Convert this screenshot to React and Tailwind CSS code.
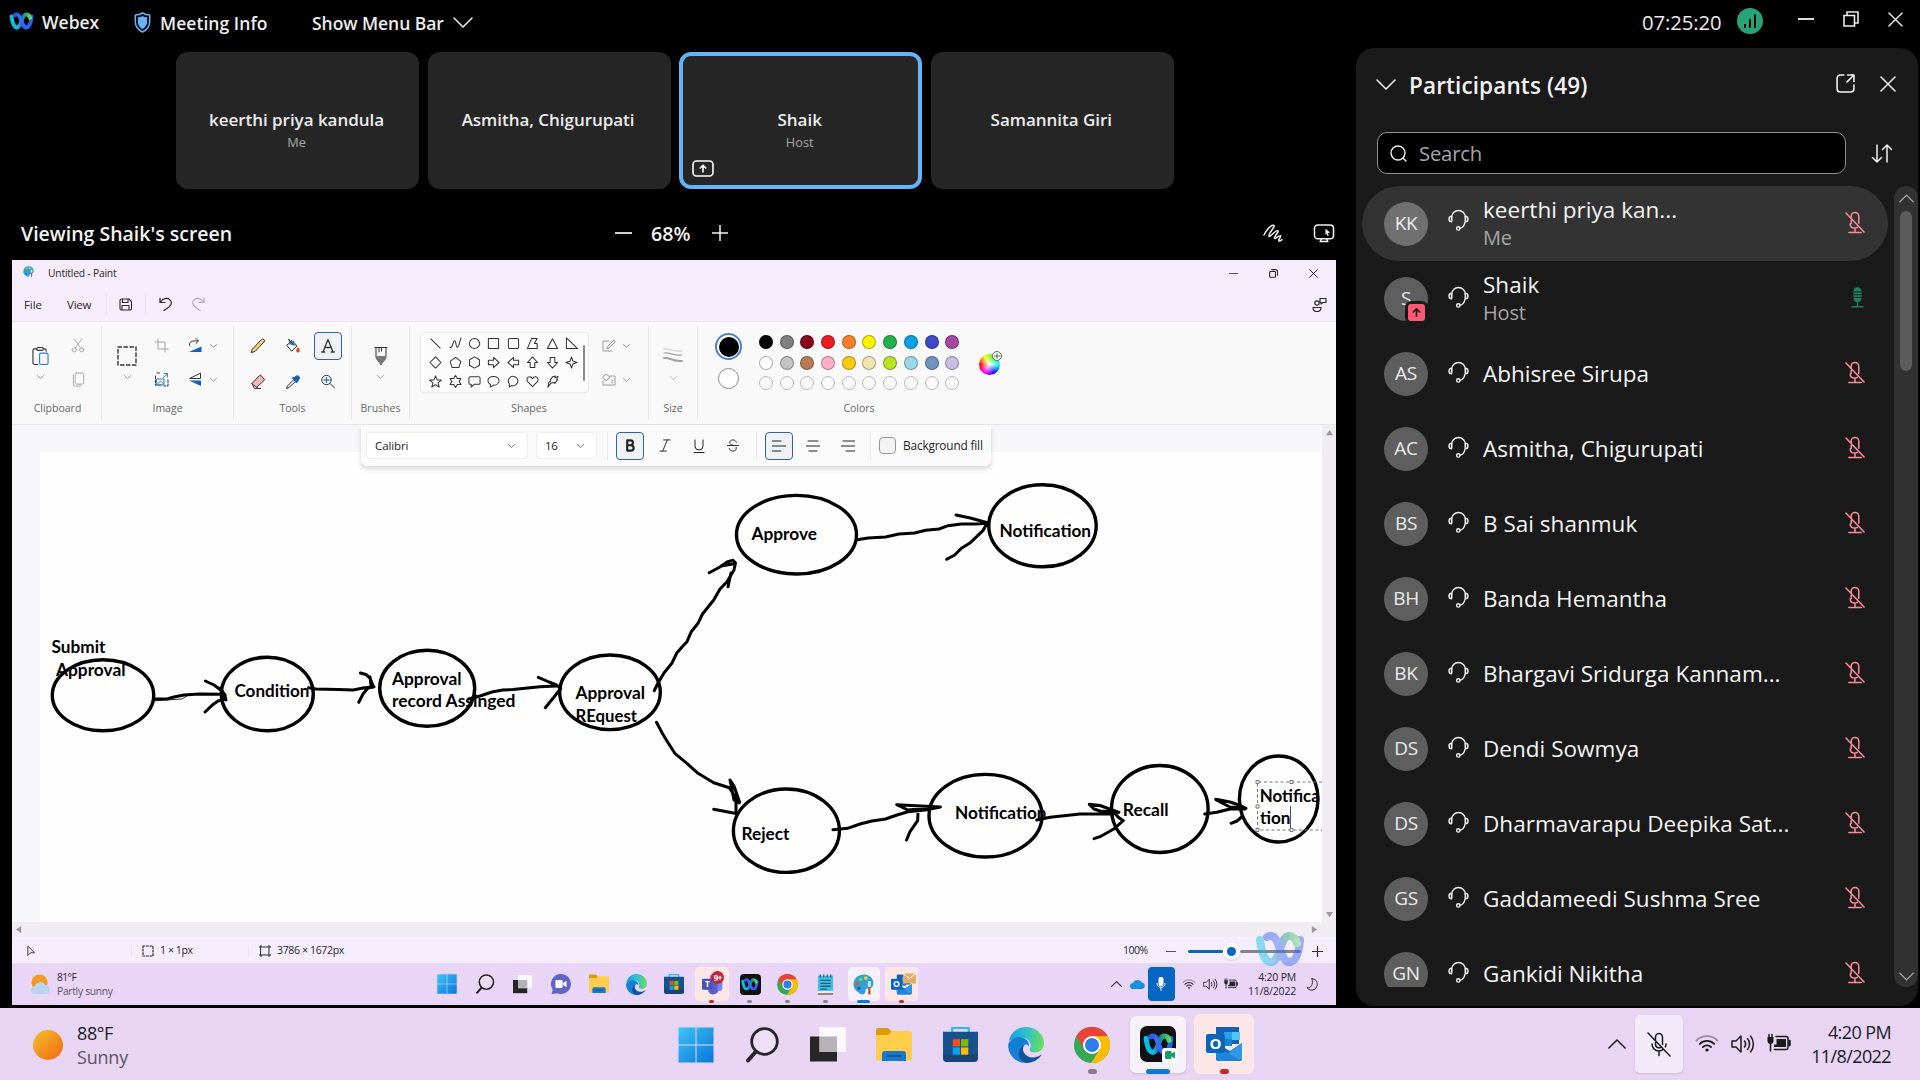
import React from "react";

/* ---------- shared glyphs ---------- */

function Svg({ box = "0 0 16 16", className = "", children, sw = 1, ...rest }) {
  return (
    <svg viewBox={box} className={`shrink-0 ${className}`} fill="none" stroke="currentColor" strokeWidth={sw} strokeLinecap="round" strokeLinejoin="round" {...rest}>
      {children}
    </svg>
  );
}

const ChevronDown = ({ className, sw = 1.5 }) => (
  <Svg box="0 0 20 11" sw={sw} className={className}><path d="M1 1l9 9 9-9" /></Svg>
);
const ChevronUp = ({ className, sw = 1.5 }) => (
  <Svg box="0 0 20 11" sw={sw} className={className}><path d="M1 10l9-9 9 9" /></Svg>
);
const Cross = ({ className, sw = 1.5 }) => (
  <Svg box="0 0 16 16" sw={sw} className={className}><path d="M1 1l14 14M15 1L1 15" /></Svg>
);

function WebexMark({ className, id, box = "0 0 50 36" }) {
  return (
    <svg viewBox={box} className={`shrink-0 ${className}`} fill="none" strokeWidth="8" strokeLinecap="round">
      <defs>
        <linearGradient id={`${id}a`} gradientUnits="userSpaceOnUse" x1="4" y1="10" x2="44" y2="8">
          <stop offset="0" stopColor="#07c1e4" /><stop offset="0.3" stopColor="#12b8e6" /><stop offset="0.5" stopColor="#1c6fb0" /><stop offset="0.7" stopColor="#23a07a" /><stop offset="1" stopColor="#66e05a" />
        </linearGradient>
        <linearGradient id={`${id}b`} gradientUnits="userSpaceOnUse" x1="8" y1="5" x2="46" y2="20">
          <stop offset="0" stopColor="#2a52e8" /><stop offset="0.4" stopColor="#3a6bff" /><stop offset="1" stopColor="#2f5cf0" />
        </linearGradient>
      </defs>
      <path d="M34 31C41 31 44 22 45 9" stroke={`url(#${id}b)`} />
      <path d="M16 31C25 31 25 5 34 5C38 5 41 8 42 12" stroke={`url(#${id}a)`} />
      <path d="M12 6C13 5 14 5 16 5C25 5 25 31 34 31" stroke={`url(#${id}b)`} />
      <path d="M5 9C7 24 10 31 16 31" stroke={`url(#${id}a)`} />
    </svg>
  );
}

const Headset = ({ className }) => (
  <Svg box="0 0 21 22" sw={1.4} className={className}>
    <path d="M3.6 11.5V8.4a6.9 6.9 0 0 1 13.8 0v3.1" />
    <path d="M3.6 7.2C1.8 7.2 1 8.300 1 10s.8 2.800 2.600 2.800zM17.400 7.200c1.800 0 2.600 1.100 2.600 2.800s-.8 2.800-2.600 2.800zM17 13c-.5 3-2.300 5.700-5 6.200" />
    <circle cx="10.300" cy="19.400" r="1.700" />
  </Svg>
);
const MicOff = ({ className }) => (
  <Svg box="0 0 21 24" sw={1.6} className={className}>
    <path d="M6.500 8V5.500a4 4 0 0 1 8 0v7.200M6.500 10v3M5.500 13.500c0 2.500 2 4.300 4.800 4.300 1 0 1.900-.2 2.600-.7M10.500 18v4M4 22.400h13M1 2l19 20" />
  </Svg>
);
const MicOn = ({ className }) => (
  <Svg box="0 0 14 23" sw={1.400} className={className}>
    <rect x="2.500" y="1" width="9" height="16" rx="4.500" fill="#1d805f" stroke="none" />
    <path d="M3 6h8M3 9h8M3 12h8" stroke="#1a1a1a" strokeWidth="1" />
    <path d="M7 16.500v5M1 22h12" />
  </Svg>
);

/* ---------- taskbar artwork ---------- */

const StartIcon = ({ className, id }) => (
  <svg viewBox="0 0 36 36" className={className}>
    <defs><linearGradient id={id} x1="0" y1="0" x2="1" y2="1" gradientUnits="objectBoundingBox"><stop offset="0" stopColor="#3fc3f8" /><stop offset="1" stopColor="#0a76d8" /></linearGradient></defs>
    <path fill={`url(#${id})`} d="M1 .5h16.500v17H.5V1zM18.500 .5h17v17h-17zM.5 18.500h17v17H.5zM18.500 18.500h17v17h-17z" />
  </svg>
);
const SearchIcon = ({ className }) => (
  <svg viewBox="0 0 36 36" className={className} fill="none" stroke="#262329" strokeLinecap="round">
    <circle cx="20.500" cy="14.500" r="12.800" strokeWidth="2.800" fill="#f4eafa" fillOpacity=".5" /><path d="M11.500 25L4 33.500" strokeWidth="4" />
  </svg>
);
const TaskViewIcon = ({ className }) => (
  <svg viewBox="0 0 36 36" className={className}>
    <path fill="#262626" d="M0 9.500h27v25H0z" /><path fill="#fcfcfc" d="M9.500 0H36v25H9.500z" opacity=".92" /><path fill="#b5b3b5" d="M9.500 9.500H27V25H9.500z" />
  </svg>
);
const ChatIcon = ({ className }) => (
  <svg viewBox="0 0 36 36" className={className}>
    <path fill="#6264c7" d="M18 0a18 18 0 1 1-6 35L1 36l2-8A18 18 0 0 1 18 0z" /><rect x="8" y="11" width="13" height="14" rx="2" fill="#fff" /><path fill="#fff" d="M22 16l6-4v12l-6-4z" />
  </svg>
);
const FolderIcon = ({ className }) => (
  <svg viewBox="0 0 36 36" className={className}>
    <path fill="#dc9b08" d="M0 3a2 2 0 0 1 2-2h10l4 4v3H0z" /><path fill="#fdce4b" d="M0 8h12l4-4h18a2 2 0 0 1 2 2v27.500H0z" /><path fill="#1877c9" d="M6 34v-7a3 3 0 0 1 3-3h18a3 3 0 0 1 3 3v7z" /><path d="M11 29h14" stroke="#0d4f93" strokeWidth="1.500" />
  </svg>
);
const StoreIcon = ({ className }) => (
  <svg viewBox="0 0 36 36" className={className}>
    <path d="M9.500 6V1h17v5" fill="none" stroke="#2db7ef" strokeWidth="2.200" /><path fill="#17528c" d="M0 5h36v27a4 4 0 0 1-4 4H4a4 4 0 0 1-4-4z" /><path fill="#21345f" d="M0 28h36v4a4 4 0 0 1-4 4H4a4 4 0 0 1-4-4z" opacity=".5" />
    <path fill="#f25022" d="M10 12.500h7.500v7.500H10z" /><path fill="#7fba00" d="M18.500 12.500H26v7.500h-7.500z" /><path fill="#00a4ef" d="M10 21h7.500v7.500H10z" /><path fill="#ffb900" d="M18.500 21H26v7.500h-7.500z" />
  </svg>
);
const EdgeIcon = ({ className, id }) => (
  <svg viewBox="0 0 36 36" className={className}>
    <defs><linearGradient id={id} x1="0" y1="0.200" x2="1" y2="0.300"><stop offset="0" stopColor="#1b9be0" /><stop offset=".5" stopColor="#2fc1cf" /><stop offset="1" stopColor="#6bdc5c" /></linearGradient></defs>
    <path fill={`url(#${id})`} d="M1 14C3 5 10 0 18 0c10 0 18 7.500 18 16 0 6-4 9.500-9 9.500-4.500 0-6-2-5-4 1.500-2.500 1-9-6-10.500C9 10 3 12 1 14z" />
    <path fill="#1180d6" d="M.2 18C1 12 8 9 14 10.500c5 1.300 7.500 5 7 9-1-2-3-2.500-4.500-1.500-5 3.500-2 14 7.500 15.500-2 1.700-5 2.500-8 2.300C7 35 0 27 .2 18z" />
    <path fill="#11529e" d="M16.500 18c-4 4 0 12.500 8 12.500 4 0 7-1.500 9.500-3.500C31 32.500 25 36 18.500 36 9 34 8 22 16.500 18z" />
  </svg>
);
const ChromeIcon = ({ className }) => (
  <svg viewBox="0 0 36 36" className={className}>
    <circle cx="18" cy="18" r="18" fill="#34a853" /><path fill="#fbbc05" d="M18 9h15.600A18 18 0 0 1 17 36l8.800-13.500z" /><path fill="#ea4335" d="M2.400 9A18 18 0 0 1 33.600 9H18l-7.800 13.500z" /><circle cx="18" cy="18" r="9" fill="#fff" /><circle cx="18" cy="18" r="7" fill="#2f7de9" />
  </svg>
);
const NotepadIcon = ({ className }) => (
  <svg viewBox="0 0 36 36" className={className}>
    <path fill="#45bde0" d="M5 3h26v28H5z" /><path fill="#dff3f8" d="M5 29h26v5H5z" /><path fill="#8a5b3c" d="M5 33h26v2.500H5z" /><path d="M9 11h18M9 16h18M9 21h18M9 26h12" stroke="#14657f" strokeWidth="2.200" /><path d="M9 1v5M15 1v5M21 1v5M27 1v5" stroke="#135a72" strokeWidth="2" />
  </svg>
);
const PaintIcon = ({ className }) => (
  <svg viewBox="0 0 36 36" className={className}>
    <path fill="#28a4dc" d="M19 1c9 0 16 6 16 15 0 6-4 9-9 9-5 0-4 3-5 6-1 5-6 5-10 2C5 29 0 24 1 16 2 7 9 1 19 1z" />
    <circle cx="8" cy="17" r="3.500" fill="#e8573c" /><circle cx="13" cy="9" r="3.200" fill="#7fd14a" /><circle cx="22" cy="7" r="3.200" fill="#f7c948" /><circle cx="10" cy="25" r="3" fill="#1c5fb8" />
    <path d="M28 12v10" stroke="#e4e4e4" strokeWidth="5" /><path d="M28 22v13" stroke="#a8622c" strokeWidth="4" />
  </svg>
);
const TeamsIcon = ({ className }) => (
  <svg viewBox="0 0 36 36" className={className}>
    <circle cx="19" cy="6" r="5.500" fill="#7b83eb" /><path fill="#5a60c9" d="M11 13h17v13a9 9 0 0 1-17 4z" /><path fill="#7b83eb" d="M26 13h9v10a6 6 0 0 1-8 6z" /><rect y="8" width="19" height="19" rx="2" fill="#4a52b5" /><text x="5" y="22.500" fontSize="14" fontWeight="700" fill="#fff" fontFamily="Open Sans, sans-serif">T</text>
  </svg>
);
const OutlookIcon = ({ className }) => (
  <svg viewBox="0 0 36 36" className={className}>
    <path fill="#0f62b5" d="M10 1h23v17H10z" /><path fill="#2aa0ea" d="M18 6h8v7h-8z" /><path fill="#52c5f8" d="M26 6h8v8h-8z" /><path fill="#1581d6" d="M18 13h8v7h-8z" /><path fill="#1a6ab9" d="M10 17l14 8 12-8v16a2 2 0 0 1-2 2H12a2 2 0 0 1-2-2z" /><path fill="#2e9ae6" d="M36 17v17L12 35z" /><path fill="#1b87dc" d="M10 20l25 14.500H12a2 2 0 0 1-2-2z" />
    <rect y="8" width="19" height="19" rx="2" fill="#0c64b8" /><text x="3.600" y="23" fontSize="15" fontWeight="700" fill="#fff" fontFamily="Open Sans, sans-serif">O</text>
  </svg>
);
const WebexTile = ({ className, mark, id }) => (
  <div className={`flex items-center justify-center bg-[#111] ${className}`}><WebexMark id={id} className={mark} /></div>
);

const Wifi = ({ className }) => (
  <Svg box="0 0 24 20" sw={1.800} className={className}>
    <path d="M1.500 7.500a15 15 0 0 1 21 0" className="opacity-40" /><path d="M4.800 10.800a10.300 10.300 0 0 1 14.400 0M8 14a5.700 5.700 0 0 1 8 0" /><circle cx="12" cy="17" r="1.600" fill="currentColor" stroke="none" />
  </Svg>
);
const Speaker = ({ className }) => (
  <Svg box="0 0 24 20" sw={1.500} className={className}>
    <path d="M1 7h4l5-5v16l-5-5H1zM13.500 7a5 5 0 0 1 0 6M16.500 4.500a8.500 8.500 0 0 1 0 11M19.500 2a12.500 12.500 0 0 1 0 16" />
  </Svg>
);
const Battery = ({ className }) => (
  <Svg box="0 0 24 20" sw={1.500} className={className}>
    <path d="M9 3.500h10a2 2 0 0 1 2 2v9a2 2 0 0 1-2 2H7.500" /><path d="M9.500 6H19v8H7v-2.500h2.500z" fill="currentColor" stroke="none" /><path d="M22.500 8v4" strokeWidth="2.500" />
    <path d="M.5 4h6v4a3 3 0 0 1-6 0z" fill="currentColor" stroke="none" /><path d="M2 1.500V4M5 1.500V4M3.500 11v7" />
  </Svg>
);

/* ---------- Webex window ---------- */

function TopBar() {
  return (
    <header className="flex h-[52px] items-start text-[#ececec]">
      <WebexMark id="wxTop" className="ml-[9px] mt-[12px] h-[18px] w-[25px]" />
      <span className="ml-[8px] mt-[11px] w-[57px] text-[17.500px] leading-[22px] font-semibold">Webex</span>
      <Svg box="0 0 17 21" sw={1.500} className="ml-[35px] mt-[12px] h-[21px] w-[17px] text-[#64b4fa]">
        <path d="M8.500 1c2 1.300 4.500 2 7.200 2v6.500c0 5-3 8.500-7.200 10.500C4.300 18 1.300 14.500 1.300 9.500V3c2.700 0 5.200-.7 7.200-2z" />
        <path d="M8.500 4c1.300.8 2.800 1.200 4.700 1.300v4.200c0 3.500-2 6.200-4.700 7.700-2.700-1.500-4.700-4.200-4.700-7.700V5.300C5.700 5.200 7.200 4.800 8.500 4z" fill="currentColor" stroke="none" />
      </Svg>
      <span className="ml-[9px] mt-[12px] w-[109px] text-[17.500px] leading-[23px] font-semibold tracking-[0.050px] whitespace-nowrap">Meeting Info</span>
      <span className="ml-[43px] mt-[12px] w-[132px] text-[17.500px] leading-[23px] font-semibold tracking-[-0.050px] whitespace-nowrap">Show Menu Bar</span>
      <ChevronDown className="ml-[9px] mt-[17px] h-[11px] w-[20px]" />
      <div className="ml-auto flex items-start">
        <span className="mt-[9px] w-[84px] text-[20.300px] leading-[26px] tracking-[-0.100px] whitespace-nowrap">07:25:20</span>
        <div className="ml-[11px] mt-[8px] flex size-[26px] items-end justify-center gap-[3px] rounded-full bg-[#27a37a] pb-[6px]">
          <i className="h-[4px] w-[2px] rounded bg-black" /><i className="h-[9px] w-[2px] rounded bg-black" /><i className="h-[14px] w-[2px] rounded bg-black" />
        </div>
        <i className="ml-[35px] mt-[18px] h-[2px] w-[16px] bg-[#dcdcdc]" />
        <Svg box="0 0 16 16" sw={1.600} className="ml-[29px] mt-[11px] size-[16px]"><path d="M1 4.500h10.500V15H1zM4 4V1h11v11h-3" strokeLinejoin="miter" /></Svg>
        <Cross className="mr-[17px] ml-[29px] mt-[12px] size-[15px]" />
      </div>
    </header>
  );
}

function Tile({ name, role, active }) {
  return (
    <div className={`relative h-[137px] w-[243px] rounded-[12px] border-4 bg-[#262626] pr-[2px] text-center ${active ? "border-[#64b4fa]" : "border-[#262626]"}`}>
      <div className="mt-[53px] text-[17px] leading-[22px] font-semibold tracking-[-0.030px] text-[#ededed]">{name}</div>
      {role && <div className="mt-[3px] text-[12.800px] leading-[16px] text-[#a8a8a8]">{role}</div>}
      {active && (
        <Svg box="0 0 22 17" sw={1.600} className="absolute bottom-[8px] left-[9px] h-[17px] w-[22px] text-white"><rect x="1" y="1" width="20" height="15" rx="3.500" /><path d="M11 12V5.500M8.200 8L11 5.200 13.800 8" /></Svg>
      )}
    </div>
  );
}

function ViewBar() {
  return (
    <div className="flex h-[71px] items-center pt-[17px] text-[#f2f2f2]">
      <span className="mt-px ml-[21px] w-[212px] text-[19.500px] font-semibold whitespace-nowrap">Viewing Shaik's screen</span>
      <i className="ml-[382px] h-[2px] w-[17px] bg-[#d0d0d0]" />
      <span className="mt-px ml-[19px] w-[42px] text-[19.700px] font-semibold">68%</span>
      <Svg box="0 0 16 16" sw={1.500} className="ml-[19px] size-[16px]"><path d="M8 0v16M0 8h16" /></Svg>
      <Svg box="0 0 20 18" sw={1.500} className="ml-[535px] h-[18px] w-[20px]"><path d="M1 11C3.500 6 8 .8 10.500 1.200c3 .8-6 8.800-4.500 11 1.200 1.600 6.500-6.500 8.700-5.500 2 1-4.400 6-3.200 7.600 1 1.200 4.500-3.500 6-2.600 1.200.9-3 4-1.500 5.300.8.400 2-.5 3-1.300" /></Svg>
      <Svg box="0 0 22 20" sw={1.600} className="ml-[30px] h-[19px] w-[22px]"><rect x="1" y="1" width="20" height="14.500" rx="3.500" /><path d="M8 16l-1 2.500h8L14 16" /><path d="M12.500 5l5 4-2.500.5 1 2.500-1.300.5-1-2.500-1.200 1.500z" fill="currentColor" stroke="none" /></Svg>
    </div>
  );
}

/* ---------- Paint ---------- */

function Group({ label, className, children }) {
  return (
    <div className={`flex shrink-0 flex-col items-center ${className}`}>
      <div className="flex h-[75px] w-full items-start">{children}</div>
      <span className="text-[10.500px] leading-[14px] text-[#666]">{label}</span>
    </div>
  );
}
const Divider = ({ className = "h-[94px]" }) => <i className={`w-px shrink-0 bg-[#e9e7ea] ${className}`} />;
const TinyChevron = ({ className = "" }) => <ChevronDown sw={2.400} className={`h-[4px] w-[7px] text-[#8a8a8a] ${className}`} />;

const SHAPES = [
  "M2 2l10 10", "M1 11c3 2 3-7 5-7s1 7 3 7 2-5 4-10", "M7 1.500a5.500 5.500 0 1 0 .01 0z", "M1.500 1.500h11v11h-11z", "M3 1.500h8a1.500 1.500 0 0 1 1.500 1.500v8a1.500 1.500 0 0 1-1.500 1.500H3A1.500 1.500 0 0 1 1.500 11V3A1.500 1.500 0 0 1 3 1.500z", "M6 1.500h6L9 7h3v5.500H1.500z", "M7 2l5.500 10.500h-11z", "M1.500 1v11.500h12z",
  "M7 1l6 6-6 6-6-6z", "M7 1.500l5.800 4.300-2.200 6.700H3.400L1.200 5.800z", "M7 1l5.300 3v6L7 13l-5.300-3V4z", "M1.500 4.500H7V1.500L13 7l-6 5.500v-3H1.500z", "M12.500 4.500H7V1.500L1 7l6 5.500v-3h5.500z", "M4.500 12.500V7H1.500L7 1l5.500 6h-3v5.500z", "M4.500 1.500V7H1.500L7 13l5.500-6h-3V1.500z", "M7 1l1.500 4.500L13 7 8.500 8.500 7 13 5.500 8.500 1 7l4.500-1.500z",
  "M7 1l1.700 4.300 4.600.2-3.600 2.900 1.300 4.500L7 10.300l-4 2.600 1.300-4.500L.7 5.500l4.600-.2z", "M7 .5l2 3.200h3.800L11 7l1.800 3.300H9L7 13.500 5 10.300H1.200L3 7 1.200 3.700H5z", "M2.500 2h9A1.500 1.500 0 0 1 13 3.500v5a1.500 1.500 0 0 1-1.500 1.500H6.500L3.500 13v-3h-1A1.500 1.500 0 0 1 1 8.500v-5A1.500 1.500 0 0 1 2.500 2z", "M7 1.500c3.500 0 6 2 6 4.700S10.500 11 7 11L3.500 13l.3-2.700C2 9.400 1 8 1 6.200c0-2.700 2.500-4.700 6-4.700z", "M7 1.500a5 5 0 1 1-2 9.700L2.500 13V9.500A5 5 0 0 1 7 1.500z", "M7 12.500L2 7.500C0 5 1.500 2 4 2c1.500 0 2.500 1 3 2 .5-1 1.500-2 3-2 2.500 0 4 3 2 5.500z", "M7 2l3-1-.5 2L13 1.500l-1.500 3 1 .5-3 4-1-1L5 9 2 13l1-5 2-1.500-.5-1z",
];
const PALETTE = [
  ["bg-black", "bg-[#7f7f7f]", "bg-[#88001b]", "bg-[#ed1c24]", "bg-[#ff7f27]", "bg-[#fff200]", "bg-[#22b14c]", "bg-[#00a2e8]", "bg-[#3f48cc]", "bg-[#a349a4]"],
  ["bg-white", "bg-[#c3c3c3]", "bg-[#b97a57]", "bg-[#ffaec9]", "bg-[#ffc90e]", "bg-[#efe4b0]", "bg-[#b5e61d]", "bg-[#99d9ea]", "bg-[#7092be]", "bg-[#c8bfe7]"],
  Array(10).fill("bg-[#fafafa]"),
];

function PaintRibbon() {
  return (
    <div className="flex h-[103px] items-start border-b border-[#e4e6e7] bg-[#f9f9f9] pt-[4px] text-[#333]">
      <Group label="Clipboard" className="w-[91px]">
        <div className="ml-[19px] mt-[20px] flex w-[18px] flex-col items-center">
          <Svg box="0 0 18 20" className="h-[20px] w-[17px]" sw={1.200}><path d="M6 19H3a2 2 0 0 1-2-2V4a1.500 1.500 0 0 1 1.500-1.500H5M12 2.500h1.500A1.500 1.500 0 0 1 15 4v1" /><rect x="5" y="1" width="7" height="3" rx="1.500" /><rect x="8" y="7" width="9" height="12" rx="1.500" stroke="#2a7fcf" fill="#f2f8fd" /></Svg>
          <TinyChevron className="mt-[9px]" />
        </div>
        <div className="ml-[22px] mt-[12px] flex flex-col gap-[19px] text-[#a5a5a5]">
          <Svg box="0 0 14 16" className="h-[15px] w-[14px]"><path d="M3 1l7 10M11 1L4 11" /><circle cx="3" cy="12.500" r="2.200" /><circle cx="11" cy="12.500" r="2.200" /></Svg>
          <Svg box="0 0 14 16" className="h-[15px] w-[14px]"><rect x="4" y="1" width="9" height="12" rx="1.500" /><path d="M2 3v10a2 2 0 0 0 2 2h6" /></Svg>
        </div>
      </Group>
      <Divider className="-ml-[2px] h-[94px]" />
      <Group label="Image" className="w-[131px]">
        <div className="ml-[15px] mt-[20px] flex w-[20px] flex-col items-center">
          <Svg box="0 0 20 20" className="size-[20px]" sw={1.400}><rect x="1" y="1" width="18" height="18" strokeDasharray="3.500 2.500" /></Svg>
          <TinyChevron className="mt-[9px]" />
        </div>
        <div className="ml-[17px] mt-[12px] flex flex-col gap-[19px]">
          <Svg box="0 0 15 15" className="size-[15px] text-[#a5a5a5]"><path d="M4 1v10h10M1 4h10v10" /></Svg>
          <Svg box="0 0 15 15" className="size-[15px]"><path d="M3 1h4M1.500 4v9h6M14 8v6h-4" strokeDasharray="2.500 1.500" /><path d="M3 7h7v6H3zM3.500 12l3-3 3 3" stroke="#2a7fcf" /><path d="M9 6l4-4M10 1.500h3.500V5" stroke="#2a7fcf" /></Svg>
        </div>
        <div className="ml-[19px] mt-[12px] flex flex-col gap-[19px]">
          <div className="flex items-center gap-[7px]"><Svg box="0 0 15 15" className="size-[15px]"><path d="M2 8c-2-3 1-5 4-5h4M8 .5L10.500 3 8 5.500" /><path d="M1 14l12.500-5.500V14z" fill="#1261bd" stroke="none" /></Svg><TinyChevron /></div>
          <div className="flex items-center gap-[7px]"><Svg box="0 0 15 15" className="size-[15px]"><path d="M12.500 1.500v5H2z" /><path d="M1 8.500h12V14z" fill="#1261bd" stroke="none" /></Svg><TinyChevron /></div>
        </div>
      </Group>
      <Divider />
      <Group label="Tools" className="w-[117px]">
        <div className="ml-[7px] mt-[6px] grid grid-cols-[34px_34px_34px] grid-rows-[28px_40px] place-items-center gap-x-px">
          <Svg box="0 0 15 16" className="size-[16px]"><path d="M2 11L11 1.500a1.500 1.500 0 0 1 2.500 2.500L4.500 13.500l-3.500 1z" fill="#f5cf73" /></Svg>
          <Svg box="0 0 15 16" className="size-[16px]"><path d="M1.500 7l5-4.500 5 5.500-5 5z" fill="#fff" /><path d="M3.500 5.500l3-3 4 4.500z" fill="#2a7fcf" stroke="#2a7fcf" /><path d="M4.500 4L3 1l5 6" /><path d="M12.500 9c1.500 2 1.800 3 1.800 3.700a1.800 1.800 0 0 1-3.600 0c0-.7.300-1.700 1.800-3.700z" fill="#e0481c" stroke="none" /></Svg>
          <div className="flex h-[28px] w-[28px] items-center justify-center rounded-[4px] border border-[#35609f] bg-[#f0f1f4]"><Svg box="0 0 14 16" className="h-[16px] w-[14px]" sw={1.300}><path d="M2 14L7 1.500 12 14M3.700 9.500h6.600M.8 14h3M10.200 14h3" /></Svg></div>
          <Svg box="0 0 15 16" className="mt-[4px] size-[16px]"><path d="M1.500 9.500L9 1.500a1 1 0 0 1 1.500 0L13.500 5a1 1 0 0 1 0 1.500L6.500 13z" fill="#f7b3b8" /><path d="M1.500 9.500l2.500 5h3l-.5-1.500M6 14.500h4" /></Svg>
          <Svg box="0 0 15 16" className="mt-[4px] size-[16px]"><path d="M8 6L2 12l-1 2.500 2.500-1L9.500 8" /><path d="M7 4l4 5 1.500-2.500c2-1.500 2-3 1-4s-2.500-1-4 .5z" fill="#1261bd" stroke="#1261bd" /></Svg>
          <Svg box="0 0 15 16" className="mt-[4px] size-[16px]"><circle cx="6" cy="6" r="4.700" /><path d="M9.500 9.500L14 14" /><path d="M6 3.500v5M3.500 6h5" stroke="#2a7fcf" strokeWidth="1.300" /></Svg>
        </div>
      </Group>
      <Divider />
      <Group label="Brushes" className="w-[57px]">
        <div className="mx-auto mt-[20px] flex w-[14px] flex-col items-center">
          <Svg box="0 0 14 20" className="h-[20px] w-[14px]"><path d="M1 1.500h12M2 1.500v9h10v-9M5 2v4M7.500 2v3" /><path d="M2 10.500h10c.5 3-3 5-5 8.500-2-3.500-5.500-5.500-5-8.500z" fill="#777" stroke="#777" /></Svg>
          <TinyChevron className="mt-[9px]" />
        </div>
      </Group>
      <Divider />
      <Group label="Shapes" className="w-[238px]">
        <div className="ml-[10px] mt-[6px] flex h-[61px] w-[169px] justify-between rounded-[4px] border border-[#ebebeb] bg-[#fcfcfc] pt-[1px] pr-[3px] pl-[5px]">
          <div className="grid grid-cols-[repeat(8,19.400px)] grid-rows-[repeat(3,19px)] place-items-center">
            {SHAPES.map((d, i) => <Svg key={i} box="0 0 14 14" className="size-[13px]" sw={1.100}><path d={d} /></Svg>)}
          </div>
          <i className="mt-[11px] h-[36px] w-[2px] rounded bg-[#8b8b8b]" />
        </div>
        <div className="ml-[13px] mt-[13px] flex flex-col gap-[21px] text-[#9a9a9a]">
          <div className="flex items-center gap-[7px]"><Svg box="0 0 14 13" className="h-[13px] w-[14px]"><path d="M7 2H1v10h9M5 9.500L6 7l6-6 1.500 1.500-6 6z" /></Svg><TinyChevron /></div>
          <div className="flex items-center gap-[7px]"><Svg box="0 0 14 13" className="h-[13px] w-[14px]"><path d="M8 3h5v9H1V8M1 4l3-3 4 3-4 4z M10 7v3" /></Svg><TinyChevron /></div>
        </div>
      </Group>
      <Divider />
      <Group label="Size" className="w-[48px]">
        <div className="mx-auto mt-[22px] flex w-[20px] flex-col items-center text-[#a3a3a3]">
          <Svg box="0 0 20 16" className="h-[16px] w-[20px]"><path d="M1 1c6-1 9 3 18 2" strokeWidth=".6" /><path d="M1 5c6-1 9 3 18 2" strokeWidth="1.200" /><path d="M1 10c6-1 9 4 18 3" strokeWidth="2" /></Svg>
          <TinyChevron className="mt-[12px] opacity-60" />
        </div>
      </Group>
      <Divider />
      <Group label="Colors" className="w-[322px]">
        <div className="ml-[17px] mt-[7px] flex flex-col items-center gap-[8px]">
          <i className="flex size-[27px] items-center justify-center rounded-full border-2 border-[#4f7fc4] bg-white"><i className="size-[20px] rounded-full bg-black" /></i>
          <i className="size-[21px] rounded-full border border-[#8d8d8d] bg-white" />
        </div>
        <div className="ml-[17px] mt-[9px] flex flex-col gap-[6.500px]">
          {PALETTE.map((row, r) => (
            <div key={r} className="flex gap-[6.700px]">
              {row.map((c, i) => <i key={i} className={`size-[14px] rounded-full border ${r === 2 ? "border-[#b9b9b9]" : "border-[#0000004d]"} ${c}`} />)}
            </div>
          ))}
        </div>
        <div className="relative ml-[20px] mt-[28px] size-[21px] rounded-full bg-[radial-gradient(circle,#fff_0%,transparent_65%),conic-gradient(from_270deg,red,yellow,lime,cyan,blue,magenta,red)]">
          <Svg box="0 0 10 10" sw={0.800} className="absolute -top-[3px] left-[13px] size-[10px] text-[#444]"><circle cx="5" cy="5" r="4.500" fill="#fff" /><path d="M5 2.500v5M2.500 5h5" /></Svg>
        </div>
      </Group>
    </div>
  );
}

function TextToolbar() {
  const box = "flex h-[28px] w-[28px] items-center justify-center rounded-[4px] border border-[#35609f] bg-[#f0f1f4]";
  return (
    <div className="absolute top-[165px] left-[349px] flex h-[41px] w-[630px] items-center rounded-b-[5px] bg-[#fafafa] text-[11.500px] text-[#222] shadow-[0_3px_5px_rgba(0,0,0,0.15)]">
      <div className="ml-[5px] flex h-[27px] w-[162px] items-center justify-between rounded-[4px] border border-[#eee] bg-white pr-[12px] pl-[8px]"><span className="tracking-[-0.1px]">Calibri</span><TinyChevron className="!text-[#555]" /></div>
      <div className="ml-[8px] flex h-[27px] w-[61px] items-center justify-between rounded-[4px] border border-[#eee] bg-white pr-[12px] pl-[8px]"><span className="tracking-[-0.3px]">16</span><TinyChevron className="!text-[#555]" /></div>
      <Divider className="ml-[10px] h-[28px]" />
      <div className={`ml-[8px] ${box}`}><Svg box="0 0 10 14" className="h-[13px] w-[10px]" sw={2.300}><path d="M2 1.500h3.500a2.600 2.600 0 0 1 0 5.200H2zM2 6.700h4a2.900 2.900 0 0 1 0 5.800H2z" /></Svg></div>
      <Svg box="0 0 12 14" className="ml-[15px] h-[13px] w-[12px]"><path d="M4.500 1h7M.5 13h7M8.500 1l-5 12" /></Svg>
      <Svg box="0 0 12 14" className="ml-[22px] h-[14px] w-[12px]"><path d="M2 1v6a4 4 0 0 0 8 0V1M1 13.500h10" /></Svg>
      <Svg box="0 0 12 14" className="ml-[22px] h-[13px] w-[12px]"><path d="M9.500 3.500C9 2 8 1 6 1 3.500 1 2.300 2.500 2.500 4c.2 1.500 1.500 2.200 3 2.600M0 7h12M9.500 9c.5 3-1.500 4-3.500 4-2.300 0-3.500-1-4-2.800" /></Svg>
      <Divider className="ml-[17px] h-[28px]" />
      <div className={`ml-[8px] ${box}`}><Svg box="0 0 14 12" className="h-[12px] w-[14px]"><path d="M0 1h9M0 6h14M0 11h9" /></Svg></div>
      <Svg box="0 0 14 12" className="ml-[13px] h-[12px] w-[14px]"><path d="M2 1h10M0 6h14M3 11h8" /></Svg>
      <Svg box="0 0 14 12" className="ml-[21px] h-[12px] w-[14px]"><path d="M2 1h12M0 6h14M5 11h9" /></Svg>
      <Divider className="ml-[15px] h-[28px]" />
      <i className="ml-[8px] size-[17px] rounded-[4px] border border-[#999] bg-[#f3f3f3]" />
      <span className="ml-[7px] text-[11.800px] tracking-[-0.150px] whitespace-nowrap">Background fill</span>
    </div>
  );
}

const NODES = [
  [103, 695.3, 50.7, 35.500], [267.300, 694, 46, 36.800], [427.200, 688.300, 47.500, 38], [610, 692.300, 50.300, 37.300],
  [796.500, 534.700, 60, 39.300], [1042.500, 525.800, 53.700, 41], [786.400, 830.700, 53, 41.700], [985.500, 815.700, 56.500, 41.300],
  [1159.800, 809, 48.300, 43.500], [1278.700, 799, 39.300, 43],
];
const STROKES = [
  "M154 699L167 699 174 697 184 695 199 694 221 694.3M205.400 681L214 685 222 691 225 695 225.500 699 218 701 212 705.300 205 712M220 688L226 700",
  "M308.600 687.700L316 689 338 689.500 353.400 690 363 688 374 686.700M360.400 673L366 674.500 370 678 373.500 687 368 688 363 694 358.800 702.300M370 677L371 685",
  "M468.600 699L480 696 492 692 502.600 690 513 689.500 527.500 688 540 686.700 556.500 686M538.300 677.300L549 682 556.500 685 560.700 688.300 553 698.300 545.300 707.700",
  "M654.300 690.700L658 683 664 673 672 663 676.600 653.300 682 647 687 641.700 691.300 631.700 698 623.300 702.500 614 713.700 600 720 589 727 581.700 734 570 735.500 563 733 560.300 727 562 720.400 566.700 709.200 572.700M721 566L733 564M731 573L728 586.700",
  "M857.400 539.700L868 538 885.500 537 899 534 914.600 533 925.700 530.300 939 529 948 525.700 961.400 524 975 524 987.300 523.300M956 515L970.400 518 987.300 522.700 982.900 530.700 970.400 542.700 961.400 548.300 954.700 555 946.700 559.300",
  "M656.500 722.300L662.300 733.300 666.800 740.700 674.800 753.300 686.900 763.300 698 773.300 713.700 782.700 729.300 787.700 734 795 739 803M730 780L734 786 739.500 802 734 800 730 780M736 795L736 813.500 713.700 809.300",
  "M832.900 829.700L847.600 828.300 860 824 872 821 885.500 819 897 815 907.900 811.700 925 810 940.400 807 896.700 804.700 907.900 810 940 807M918 811.700L917.700 820.700 910 831.700 906.500 840",
  "M1036.700 820L1050 817.300 1080 814 1113.300 814M1089.300 804.300L1100 805.500 1119 812.300 1100 811 1094 809 1089.300 804.500M1114 812L1118 817 1123.300 820.700 1113.300 829.300 1100 836.700 1094 838.700",
  "M1204.700 814L1216.700 812.300 1230 809 1245 809M1215.700 799.300L1230 802 1239 805 1246 808.300 1230 807 1222 803 1215.700 799.500M1242.700 816L1237 821 1231 823.300",
];
const LABELS = [
  [51.500, 653, 54, "Submit"], [56, 676, 69.500, "Approval"], [234.500, 697.300, 75, "Condition"], [392, 684.500, 69.500, "Approval"], [392, 707.300, 123.500, "record Assinged"],
  [575.500, 699, 69.500, "Approval"], [575.500, 722, 61.500, "REquest"], [751.500, 540, 65.500, "Approve"], [999.500, 536.700, 91.500, "Notification"],
  [741.500, 840, 48, "Reject"], [955, 819, 91.500, "Notification"], [1122.800, 816, 45.800, "Recall"], [1259.800, 801.700, 60, "Notifica"], [1260, 824.200, 30.500, "tion"],
];

function Canvas() {
  return (
    <svg viewBox="40 452 1282 470" className="ml-[28px] h-[470px] w-[1282px] bg-[#fefefe]" fill="none" stroke="#000" strokeLinecap="round" strokeLinejoin="round">
      {NODES.map(([cx, cy, rx, ry], i) => <ellipse key={i} cx={cx} cy={cy} rx={rx} ry={ry} strokeWidth="3.400" />)}
      {STROKES.map((d, i) => <path key={i} d={d} strokeWidth="3" />)}
      <path d="M154 701L166 700 182 699 187 696" strokeWidth=".8" />
      <g stroke="none" fill="#000" fontFamily="Lato, 'Open Sans', sans-serif" fontWeight="700" fontSize="16.500">
        {LABELS.map(([x, y, w, t], i) => <text key={i} x={x} y={y} textLength={w} lengthAdjust="spacingAndGlyphs">{t}</text>)}
      </g>
      <g stroke="#777" strokeWidth="1" strokeLinecap="butt">
        <path d="M1322 782H1257.500V830H1322" strokeDasharray="3 2.500" />
        <path d="M1290.500 806v22" stroke="#555" />
        <g fill="#fff">
          <rect x="1256" y="780.500" width="3" height="3" /><rect x="1290" y="780.500" width="3" height="3" /><rect x="1256" y="805" width="3" height="3" /><rect x="1256" y="828.500" width="3" height="3" /><rect x="1290" y="828.500" width="3" height="3" />
        </g>
      </g>
    </svg>
  );
}

function InnerTaskbar() {
  const cell = "relative flex h-[36px] w-[37.900px] items-center justify-center";
  const dot = "absolute -bottom-[1px] left-[16px] h-[3px] w-[5px] rounded-full";
  return (
    <div className="flex h-[42px] items-center bg-[#e9d5f5] text-[#2d2535]">
      <Svg box="0 0 22 22" className="ml-[18px] h-[21px] w-[21px]" stroke="none"><circle cx="10" cy="9" r="8.500" fill="#f39a20" /><path d="M5 21a4 4 0 0 1 0-8 6 6 0 0 1 11-1.500A4.800 4.800 0 0 1 17 21z" fill="#b9d3f3" /></Svg>
      <div className="ml-[6px] w-[80px] text-[10.300px] leading-[14px] tracking-[-0.3px]"><div className="tracking-[-0.6px]">81°F</div><div className="text-[#5d5268]">Partly sunny</div></div>
      <div className="ml-[291px] flex">
        <div className={cell}><StartIcon id="winS" className="size-[20px]" /></div>
        <div className={cell}><SearchIcon className="size-[20px]" /></div>
        <div className={cell}><TaskViewIcon className="size-[19px]" /></div>
        <div className={cell}><ChatIcon className="size-[20px]" /></div>
        <div className={cell}><FolderIcon className="size-[20px]" /></div>
        <div className={cell}><EdgeIcon id="edS" className="size-[21px]" /></div>
        <div className={cell}><StoreIcon className="size-[20px]" /></div>
        <div className={cell}>
          <div className="flex h-[34px] w-[34px] items-center justify-center rounded-[4px] bg-[#fde6e6]"><TeamsIcon className="size-[21px]" /></div>
          <span className="absolute top-[5px] left-[18px] flex size-[13px] items-center justify-center rounded-full bg-[#c4213c] text-[8px] font-bold tracking-[-0.5px] text-white">9+</span>
          <i className={`${dot} bg-[#c42b1c]`} />
        </div>
        <div className={cell}><WebexTile id="wxS" className="size-[21px] rounded-[4px]" mark="w-[18px]" /><i className={`${dot} bg-[#8b7d95]`} /></div>
        <div className={cell}><ChromeIcon className="size-[21px]" /><i className={`${dot} bg-[#8b7d95]`} /></div>
        <div className={cell}><NotepadIcon className="size-[21px]" /><i className={`${dot} bg-[#8b7d95]`} /></div>
        <div className={cell}><div className="flex h-[34px] w-[32px] items-center justify-center rounded-[4px] bg-[#f7effc]"><PaintIcon className="size-[21px]" /></div><i className="absolute -bottom-[1px] left-[12px] h-[3px] w-[13px] rounded-full bg-[#0f78d4]" /></div>
        <div className={cell}>
          <div className="flex h-[34px] w-[33px] items-center justify-center rounded-[4px] bg-[#fde6e6]"><OutlookIcon className="size-[21px]" /></div>
          <Svg box="0 0 13 10" className="absolute top-[7px] left-[20px] h-[11px] w-[13px]" stroke="#fff"><rect width="13" height="10" fill="#e6ad6a" stroke="none" /><path d="M0 0l6.500 5L13 0" /></Svg>
          <i className={`${dot} bg-[#c42b1c]`} />
        </div>
      </div>
      <ChevronUp className="ml-[190px] h-[6px] w-[11px]" sw={2} />
      <Svg box="0 0 15 10" className="ml-[8px] h-[10px] w-[15px]" stroke="none"><path d="M3 10a3 3 0 0 1 0-6 5 5 0 0 1 9-.5A3.300 3.300 0 0 1 12 10z" fill="#1490df" /></Svg>
      <div className="ml-[3px] flex h-[34px] w-[27px] items-center justify-center rounded-[4px] bg-[#0567c2] text-white"><Svg box="0 0 10 14" className="h-[14px] w-[10px]"><rect x="3" y="0" width="4" height="9" rx="2" fill="currentColor" /><path d="M1 6.500a4 4 0 0 0 8 0M5 10.500v3" /></Svg></div>
      <Wifi className="ml-[7px] w-[14px]" /><Speaker className="ml-[7px] w-[15px]" /><Battery className="ml-[6px] w-[14px]" />
      <div className="ml-auto text-right text-[10.500px] leading-[14px] tracking-[-0.2px]"><div>4:20 PM</div><div>11/8/2022</div></div>
      <Svg box="0 0 12 13" className="mr-[18px] ml-[10px] h-[13px] w-[12px]"><path d="M6 .8c4 0 5.300 3 5.300 5.500S9 12.200 6 12.200c-2.200 0-4-1-5-2.500C5 10 7.500 7 6 .8z" /></Svg>
    </div>
  );
}

const Triangle = ({ d, className }) => <svg viewBox="0 0 8 8" className={`shrink-0 ${className}`} fill="#9a999c"><path d={d} /></svg>;

function SharedScreen() {
  return (
    <section className="relative ml-[12px] flex h-[745px] w-[1324px] flex-col overflow-hidden bg-[#f5edfb] text-[#2a2a2a]">
      <div className="flex h-[26px] items-center">
        <PaintIcon className="mb-[4px] ml-[11px] size-[11px]" />
        <span className="mt-[2px] ml-[14px] text-[10.300px] tracking-[-0.2px]">Untitled - Paint</span>
        <i className="ml-auto h-px w-[9px] bg-[#555]" />
        <Svg box="0 0 10 10" className="ml-[31px] size-[9px]" sw={1.200}><rect x=".7" y="2.700" width="6.500" height="6.500" rx="1" /><path d="M3 .7h4.500a2 2 0 0 1 2 2V7" /></Svg>
        <Cross sw={1.700} className="mr-[18px] ml-[31px] size-[9px]" />
      </div>
      <div className="flex h-[36px] items-center border-b border-[#eee3ee] pt-[1px] text-[11.500px]">
        <span className="mt-px ml-[12px] w-[19px] tracking-[-0.1px]">File</span>
        <span className="mt-px ml-[24px] w-[26px] tracking-[-0.2px]">View</span>
        <Divider className="ml-[13px] h-[22px]" />
        <Svg box="0 0 13 13" className="ml-[12px] size-[13px]" sw={1.100}><path d="M1 2.500A1.500 1.500 0 0 1 2.500 1h7.500l2.500 2.500v7A1.500 1.500 0 0 1 11 12H2.500A1.500 1.500 0 0 1 1 10.500zM3.500 1v3.500h5.500V1M3 12V7.500h7V12" /></Svg>
        <Divider className="ml-[13px] h-[22px]" />
        <Svg box="0 0 13 14" className="ml-[13px] h-[14px] w-[13px]" sw={1.200}><path d="M1 1v4.500h5M1.500 5C4 1.500 8 .5 10.500 2.500s2.500 5-.5 7.500l-5 3.500" /></Svg>
        <Svg box="0 0 13 14" className="ml-[20px] h-[14px] w-[13px] text-[#b3abb8]" sw={1.200}><path d="M12 1v4.500H7M11.500 5C9 1.500 5 .5 2.500 2.500s-2.500 5 .5 7.500l5 3.500" /></Svg>
        <Svg box="0 0 15 15" className="mr-[9px] ml-auto size-[15px]" sw={1.200}><circle cx="5" cy="6" r="2.200" /><path d="M1 10.500h8c0 2.500-1.500 4-4 4s-4-1.500-4-4zM8 1.500h6v4h-3L9 7V5.500H8z" /></Svg>
      </div>
      <PaintRibbon />
      <div className="flex h-[497px]">
        <div className="flex h-[497px] w-[1310px] flex-col bg-[#f7f6f9] pt-[27px]"><Canvas /></div>
        <div className="flex w-[14px] flex-col items-center justify-between bg-[#efedf1] py-[4px]"><Triangle className="size-[7px]" d="M4 1l4 6H0z" /><Triangle className="size-[7px]" d="M4 7L0 1h8z" /></div>
      </div>
      <div className="flex h-[15px] items-center justify-between bg-[#efedf1] pr-[18px] pl-[3px]"><Triangle className="size-[7px]" d="M1 4l6-4v8z" /><Triangle className="size-[7px]" d="M7 4L1 0v8z" /></div>
      <div className="flex h-[26px] items-center pt-[2px] text-[10.500px]">
        <Svg box="0 0 9 12" className="ml-[15px] h-[12px] w-[8px]"><path d="M1 1v10l3-3h4z" /></Svg>
        <Divider className="ml-[96px] h-[13px]" />
        <Svg box="0 0 12 12" className="ml-[10px] size-[12px]" sw={1.200}><rect x="1" y="1" width="10" height="10" strokeDasharray="2 1.500" /></Svg>
        <span className="ml-[6px] w-[88px] tracking-[-0.4px]">1 × 1px</span>
        <Divider className="h-[13px]" />
        <Svg box="0 0 12 12" className="ml-[10px] size-[12px]"><path d="M2 2h8v8H2zM2 0v2H0M10 0v2h2M2 12v-2H0M10 12v-2h2" /></Svg>
        <span className="ml-[6px] tracking-[-0.35px]">3786 × 1672px</span>
        <span className="ml-auto w-[24px] tracking-[-0.5px]">100%</span>
        <i className="ml-[19px] h-px w-[10px] bg-[#555]" />
        <div className="ml-[12px] flex w-[113px] items-center">
          <i className="h-[3px] w-[35px] rounded bg-[#0567c2]" />
          <i className="flex size-[17px] items-center justify-center rounded-full bg-white shadow-sm"><i className="size-[9px] rounded-full bg-[#0567c2]" /></i>
          <i className="h-[3px] flex-1 rounded bg-[#868388]" />
        </div>
        <Svg box="0 0 11 11" className="mr-[13px] ml-[11px] size-[11px]" sw={1.200}><path d="M5.500 .5v10M.5 5.500h10" /></Svg>
      </div>
      <InnerTaskbar />
      <TextToolbar />
      <WebexMark id="wxMark" className="absolute top-[671px] left-[1243px] h-[36px] w-[50px] opacity-45" />
    </section>
  );
}

/* ---------- Participants ---------- */

const PEOPLE = [
  ["AS", "Abhisree Sirupa"], ["AC", "Asmitha, Chigurupati"], ["BS", "B Sai shanmuk"], ["BH", "Banda Hemantha"], ["BK", "Bhargavi Sridurga Kannam..."],
  ["DS", "Dendi Sowmya"], ["DS", "Dharmavarapu Deepika Sat..."], ["GS", "Gaddameedi Sushma Sree"], ["GN", "Gankidi Nikitha"],
];

function Person({ initials, name, role, me, live }) {
  return (
    <div className={`flex h-[75px] w-[526px] shrink-0 items-center rounded-full ${me ? "bg-[#333]" : ""}`}>
      <div className={`relative ml-[22px] flex size-[44px] items-center justify-center rounded-full text-[19px] tracking-[-0.3px] text-[#ececec] ${me ? "bg-[#707070]" : "bg-[#5e5e5e]"}`}>
        {initials}
        {live && <span className="absolute top-[24px] left-[21px] flex size-[23px] items-center justify-center rounded-[6px] border-[3px] border-[#1a1a1a] bg-[#fc5972] text-[#1a1a1a]"><Svg box="0 0 10 10" sw={1.800} className="size-[9px]"><path d="M5 9.500V1M1.300 4.500L5 .8l3.700 3.700" /></Svg></span>}
      </div>
      <Headset className={`${me ? "mb-[8px]" : "mb-[4px]"} ml-[20px] h-[22px] w-[21px] text-[#f0f0f0]`} />
      <div className={`ml-[14px] w-[320px] whitespace-nowrap ${role ? "mb-px" : ""}`}>
        <div className="text-[22.500px] leading-[28px] tracking-[0.020px] text-[#f5f5f5]">{name}</div>
        {role && <div className="text-[20px] leading-[27px] tracking-[-0.2px] text-[#a6a6a6]">{role}</div>}
      </div>
      {live ? <MicOn className="mb-[3px] ml-[48px] h-[22px] w-[13px] text-[#1d805f]" /> : <MicOff className="mb-[3px] ml-[42px] h-[23px] w-[20px] text-[#fc8b98]" />}
    </div>
  );
}

function Participants() {
  return (
    <aside className="flex h-[958px] w-[562px] flex-col rounded-[18px] bg-[#1a1a1a] text-[#f2f2f2]">
      <div className="flex h-[84px] items-start">
        <ChevronDown className="ml-[20px] mt-[31px] h-[11px] w-[20px]" />
        <span className="ml-[13px] mt-[21px] text-[22.500px] leading-[34px] font-semibold tracking-[0.130px]">Participants (49)</span>
        <Svg box="0 0 18 18" className="mt-[26px] ml-auto size-[19px]" sw={1.500}><path d="M7.500 1H4a3 3 0 0 0-3 3v10a3 3 0 0 0 3 3h10a3 3 0 0 0 3-3v-3.500M11 1h6v6M17 1l-6.500 6.500" /></Svg>
        <Cross className="mt-[28px] mr-[22px] ml-[25px] size-[16px]" />
      </div>
      <div className="flex h-[54px] items-start">
        <div className="ml-[21px] flex h-[42px] w-[469px] items-center rounded-[10px] border-[1.500px] border-[#8f8f8f] bg-black">
          <Svg box="0 0 17 17" className="ml-[12px] size-[17px]" sw={1.400}><circle cx="8" cy="8" r="7" /><path d="M13 13l3 3" /></Svg>
          <span className="mt-px ml-[12px] text-[20.300px] tracking-[-0.2px] text-[#a6a6a6]">Search</span>
        </div>
        <Svg box="0 0 22 19" className="ml-[25px] mt-[12px] h-[19px] w-[22px]" sw={1.500}><path d="M6 1v17M1.500 13.500L6 18l4.500-4.500M16 18V1M11.500 5.500L16 1l4.500 4.500" /></Svg>
      </div>
      <div className="flex h-[801px]">
        <div className="ml-[6px] flex w-[532px] flex-col overflow-hidden">
          <Person initials="KK" name="keerthi priya kan..." role="Me" me />
          <Person initials="S" name="Shaik" role="Host" live />
          {PEOPLE.map(([i, n]) => <Person key={n} initials={i} name={n} />)}
        </div>
        <div className="flex w-[24px] flex-col items-center rounded-full bg-[#323232] text-[#aaa]">
          <ChevronUp className="mt-[8px] h-[9px] w-[15px]" sw={1.800} />
          <i className="mt-[8px] h-[160px] w-[12px] rounded-full bg-[#5c5c5c]" />
          <ChevronDown className="mt-auto mb-[6px] h-[9px] w-[15px]" sw={1.800} />
        </div>
      </div>
    </aside>
  );
}

/* ---------- desktop taskbar ---------- */

function Taskbar() {
  const cell = "relative flex h-[72px] w-[66px] items-center justify-center";
  return (
    <footer className="flex h-[72px] items-center bg-[#e8d5f4] text-[18px] tracking-[-0.4px] text-[#1b1b1b]">
      <i className="ml-[33px] mt-[2px] size-[30px] rounded-full bg-linear-to-br from-[#edc02f] to-[#f06409]" />
      <div className="mt-[2px] ml-[14px] w-[90px] leading-[24px]"><div>88°F</div><div className="tracking-[-0.2px] text-[#5a5560]">Sunny</div></div>
      <div className="ml-[496px] flex">
        <div className={cell}><StartIcon id="winL" className="mt-[2px] size-[36px]" /></div>
        <div className={cell}><SearchIcon className="mt-px size-[36px]" /></div>
        <div className={cell}><TaskViewIcon className="mt-[2px] size-[36px]" /></div>
        <div className={cell}><FolderIcon className="mt-[2px] size-[36px]" /></div>
        <div className={cell}><StoreIcon className="mt-px size-[35px]" /></div>
        <div className={cell}><EdgeIcon id="edL" className="mt-px size-[36px]" /></div>
        <div className={cell}><ChromeIcon className="mt-px size-[36px]" /><i className="absolute bottom-[6px] left-[29px] h-[5px] w-[9px] rounded-full bg-[#85788f]" /></div>
        <div className={cell}>
          <div className="relative flex h-[57px] w-[56px] items-center justify-center rounded-[6px] bg-[#f7f1fa] shadow-sm">
            <WebexTile id="wxL" className="size-[36px] rounded-[7px]" mark="w-[31px]" />
            <span className="absolute top-[32px] left-[32px] flex size-[15px] items-center justify-center rounded-[3px] bg-white"><Svg box="0 0 10 8" className="w-[10px]" stroke="none"><path d="M0 1.500A1.500 1.500 0 0 1 1.500 0h5v2.500L10 .5v7l-3.500-2V8h-5A1.500 1.500 0 0 1 0 6.500z" fill="#189c6c" /></Svg></span>
          </div>
          <i className="absolute bottom-[6px] left-[21px] h-[5px] w-[24px] rounded-full bg-[#0f78d4]" />
        </div>
        <div className={cell}><div className="flex size-[60px] items-center justify-center rounded-[6px] bg-[#fde6e8]"><OutlookIcon className="size-[36px]" /></div><i className="absolute bottom-[6px] left-[29px] h-[5px] w-[9px] rounded-full bg-[#c42b1c]" /></div>
      </div>
      <ChevronUp className="ml-[351px] h-[10px] w-[18px]" sw={1.700} />
      <div className="ml-[9px] flex h-[58px] w-[48px] items-center justify-center rounded-[5px] bg-[#f3eaf9] shadow-sm">
        <Svg box="0 0 24 25" className="h-[25px] w-[24px]" sw={1.500}><path d="M8.500 8V5a3.500 3.500 0 0 1 7 0v7.500M8.500 10.500v2a3.500 3.500 0 0 0 5 3M5 12c0 4 3 7 7 7 1.700 0 3-.5 4-1.300M19 12c0 1-.2 2-.6 3M12 19v4.500M1 1l22 23" /></Svg>
      </div>
      <Wifi className="mt-[-2px] ml-[12px] h-[20px] w-[24px]" />
      <Speaker className="ml-[12px] h-[20px] w-[24px]" />
      <Battery className="mt-[-2px] ml-[12px] h-[20px] w-[24px]" />
      <div className="mr-[29px] ml-auto text-right leading-[24px] tracking-[-0.6px] whitespace-nowrap"><div>4:20 PM</div><div>11/8/2022</div></div>
    </footer>
  );
}

export default function App() {
  return (
    <div className="flex h-[1080px] w-[1920px] flex-col overflow-hidden bg-black font-['Open_Sans','Noto_Sans',sans-serif] not-italic">
      <div className="flex h-[1008px]">
        <div className="flex w-[1356px] flex-col">
          <div className="w-[1920px]"><TopBar /></div>
          <div className="flex h-[137px] gap-[8.600px] pl-[176px]">
            <Tile name="keerthi priya kandula" role="Me" />
            <Tile name="Asmitha, Chigurupati" />
            <Tile name="Shaik" role="Host" active />
            <Tile name="Samannita Giri" />
          </div>
          <ViewBar />
          <SharedScreen />
        </div>
        <div className="mt-[48px]"><Participants /></div>
      </div>
      <Taskbar />
    </div>
  );
}
